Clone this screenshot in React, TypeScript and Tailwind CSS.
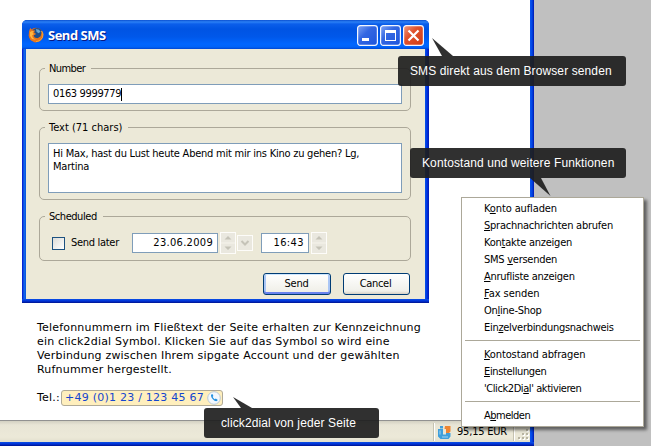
import type { ReactNode } from "react";

const ui = "font-['DejaVu_Sans_Condensed','DejaVu_Sans',sans-serif]";

function Group({ title, titleClass, className, children }: { title: string; titleClass: string; className: string; children: ReactNode }) {
  return (
    <section className={`relative rounded-[5px] border border-[#aca899] ${className}`}>
      <span className={`absolute -top-[8px] left-[5px] bg-[#ece9d8] pl-[4px] pr-[6px] leading-[15px] whitespace-nowrap ${titleClass}`}>{title}</span>
      {children}
    </section>
  );
}

function Spinner() {
  return (
    <svg className="block shrink-0" width="16" height="22" viewBox="0 0 16 22">
      <rect x="0.5" y="0.5" width="15" height="21" fill="#eae8df" stroke="#fdfcf9" />
      <path d="M1 11h14" stroke="#f6f4ec" />
      <path d="M4.500 7.500L8 4l3.500 3.500zM4.500 14.500L8 18l3.500-3.500z" fill="#c5c3b8" />
    </svg>
  );
}

function Firefox() {
  return (
    <svg className="block shrink-0" width="16" height="16" viewBox="0 0 16 16">
      <circle cx="8" cy="8" r="7.200" fill="#d8641b" />
      <circle cx="9" cy="6.300" r="5.200" fill="#1d4f8c" />
      <path d="M8 2l3 .8 1.500 2-2 1.500-2-1.500z" fill="#68a8d4" />
      <path d="M1 4.500L2.200 1l2.200 2.200 2.700.4-1 2 2 1.400-2.500 1.500 1 2 3 .8 3-2 1.400-5.600 1 2.600v4L12 14l-5 1.500-4.500-2.500L.7 9z" fill="#e8761c" />
      <path d="M2 5l2-1 2 .5-1.500 1.300L6 7 4 8.500l1 2.500 3 1.700-4-.7-2-3z" fill="#ffb640" />
      <path d="M13.500 4l1.500 3-.5 3.500-2.500 3-4 1.200" stroke="#f9a733" fill="none" />
    </svg>
  );
}

function WinButton({ kind }: { kind: "min" | "max" | "close" }) {
  return (
    <svg className="block" width="21" height="21" viewBox="0 0 21 21">
      <defs>
        <linearGradient id={`wb-${kind}`} x1="0" y1="0" x2="1" y2="1">
          <stop offset="0" stopColor={kind === "close" ? "#ef9b80" : "#7fa4f5"} />
          <stop offset="0.4" stopColor={kind === "close" ? "#e0522d" : "#3467e2"} />
          <stop offset="1" stopColor={kind === "close" ? "#cf3b12" : "#1c55dc"} />
        </linearGradient>
      </defs>
      <rect x="0.6" y="0.6" width="19.800" height="19.800" rx="2.800" fill={`url(#wb-${kind})`} stroke="#f4f7ff" strokeWidth="1.200" />
      {kind === "min" && <path d="M5 13h7v3H5z" fill="#fff" />}
      {kind === "max" && <path d="M5 5h11v11H5zM6 8v7h9V8z" fill="#fff" fillRule="evenodd" />}
      {kind === "close" && <path d="M5.500 5.500l10 10M15.500 5.500l-10 10" stroke="#fff" strokeWidth="2.200" />}
    </svg>
  );
}

function Dialog() {
  return (
    <div className={`flex h-[283px] w-[407px] flex-col rounded-t-[5px] bg-[linear-gradient(90deg,#0019cf_0,#0831d9_1px,#166aee_2px,#0855dd_4px,#0855dd_403px,#0044ee_404px,#0031dd_405px,#0018b5_407px)] text-[11px] text-black ${ui}`}>
      <div className="flex h-[29px] shrink-0 items-center rounded-t-[5px] bg-[linear-gradient(180deg,#0a4fd0_0,#2b80f5_2px,#0b5eea_4px,#0054e3_9px,#0058ea_17px,#0066ff_24px,#0063f8_27px,#0046d2_29px)] pl-[6px] pr-[5px]">
        <Firefox />
        <span className="ml-[4px] mt-[2px] flex-1 font-['Open_Sans','Noto_Sans',sans-serif] text-[13px] font-bold tracking-[-0.5px] text-white [text-shadow:1px_1px_0_#0a1883]">Send SMS</span>
        <div className="mt-[2px] flex gap-[2px]">
          <WinButton kind="min" />
          <WinButton kind="max" />
          <WinButton kind="close" />
        </div>
      </div>
      <div className="mx-[4px] h-[250px] bg-[#ece9d8] pl-[13px] pr-[14px] pt-[19px]">
        <Group title="Number" titleClass="tracking-[-0.6px]" className="h-[43px] px-[8px] pt-[15px]">
          <div className="flex h-[20px] items-center border border-[#7f9db9] bg-white pl-[4px]">
            <span className="tracking-[-0.35px]">0163 9999779</span>
            <span className="h-[13px] w-px bg-black" />
          </div>
        </Group>
        <Group title="Text (71 chars)" titleClass="tracking-normal" className="mt-[16px] h-[73px] px-[8px] pt-[15px]">
          <div className="h-[50px] border border-[#7f9db9] bg-white pl-[4px] pt-[3px] leading-[13px] tracking-[-0.23px] whitespace-nowrap">
            Hi Max, hast du Lust heute Abend mit mir ins Kino zu gehen? Lg,
            <br />
            Martina
          </div>
        </Group>
        <Group title="Scheduled" titleClass="tracking-[-0.45px]" className="mt-[16px] h-[45px] pl-[12px] pt-[15px]">
          <div className="flex h-[22px] items-center">
            <span className="size-[13px] border border-[#1c5180] bg-[linear-gradient(135deg,#dcdcd7,#fff)]" />
            <span className="ml-[6px] w-[61px] tracking-[-0.3px] whitespace-nowrap">Send later</span>
            <span className="flex h-[20px] w-[86px] items-center justify-end border border-[#7f9db9] bg-white pr-[4px] tracking-[0.3px]">23.06.2009</span>
            <span className="ml-[2px]"><Spinner /></span>
            <svg className="ml-px block" width="16" height="16" viewBox="0 0 16 16">
              <rect x="0.5" y="0.5" width="15" height="15" fill="#eae8df" stroke="#fdfcf9" />
              <path d="M4.500 6L8 9.500 11.500 6" fill="none" stroke="#c5c3b8" strokeWidth="2" />
            </svg>
            <span className="ml-[8px] flex h-[20px] w-[48px] items-center justify-end border border-[#7f9db9] bg-white pr-[4px] tracking-[0.4px]">16:43</span>
            <span className="ml-[2px]"><Spinner /></span>
          </div>
        </Group>
        <div className="mt-[12px] flex justify-end gap-[12px] pr-px">
          <button className="h-[22px] w-[68px] rounded-[3px] border border-[#003c74] bg-[linear-gradient(180deg,#fff,#eeede5)] pr-[1px] tracking-[-0.2px] shadow-[inset_0_-2px_0_#6982ee,inset_0_1px_0_#cee7ff,inset_2px_0_0_#aac6f5,inset_-2px_0_0_#aac6f5]">Send</button>
          <button className="h-[22px] w-[67px] rounded-[3px] border border-[#003c74] bg-[linear-gradient(180deg,#fff,#f0f0ea_85%,#d6d0c5)] pr-[2px] tracking-[-0.3px]">Cancel</button>
        </div>
      </div>
      <div className="h-[4px] bg-[linear-gradient(180deg,#0b50e5,#0032d8_50%,#00138c)]" />
    </div>
  );
}

function Item({ label, at, spacing }: { label: string; at: number; spacing: string }) {
  return (
    <li className={`h-[17px] pl-[22px] leading-[17px] whitespace-nowrap ${spacing}`}>
      {label.slice(0, at)}
      <span className="underline decoration-1 underline-offset-[1px] [text-decoration-skip-ink:none]">{label[at]}</span>
      {label.slice(at + 1)}
    </li>
  );
}

function Menu() {
  return (
    <ul className={`absolute left-[461px] top-[197px] h-[230px] w-[183px] border border-[#aca899] bg-white pt-[2px] text-[11px] text-black shadow-[3px_3px_3px_rgba(0,0,0,0.5)] ${ui}`}>
      <Item label="Konto aufladen" at={1} spacing="tracking-[-0.12px]" />
      <Item label="Sprachnachrichten abrufen" at={0} spacing="tracking-[-0.24px]" />
      <Item label="Kontakte anzeigen" at={3} spacing="tracking-[-0.24px]" />
      <Item label="SMS versenden" at={4} spacing="tracking-[-0.26px]" />
      <Item label="Anrufliste anzeigen" at={0} spacing="tracking-[-0.26px]" />
      <Item label="Fax senden" at={0} spacing="tracking-[-0.05px]" />
      <Item label="Online-Shop" at={2} spacing="tracking-[-0.26px]" />
      <Item label="Einzelverbindungsnachweis" at={3} spacing="tracking-[-0.3px]" />
      <li className="mx-[3px] mb-[5px] mt-[4px] h-px bg-[#aca899]" />
      <Item label="Kontostand abfragen" at={0} spacing="tracking-[-0.12px]" />
      <Item label="Einstellungen" at={0} spacing="tracking-[-0.36px]" />
      <Item label="'Click2Dial' aktivieren" at={9} spacing="tracking-[-0.42px]" />
      <li className="mx-[3px] mb-[5px] mt-[4px] h-px bg-[#aca899]" />
      <Item label="Abmelden" at={1} spacing="tracking-[-0.5px]" />
    </ul>
  );
}

const tip = "absolute flex h-[30px] items-center rounded-[3px] bg-[#1e1e1e]/92 font-['Liberation_Sans',Arial,sans-serif] text-[12px] tracking-[0.11px] text-white whitespace-nowrap";

export default function App() {
  return (
    <div className="relative h-[446px] w-[651px] overflow-hidden bg-[#c0c0c0]">
      <div className="flex h-[446px] w-[534px] flex-col bg-[linear-gradient(90deg,#0a55ee_530px,#0046e6_532px,#0018b0_534px)] pr-[4px]">
        <main className="flex h-[420px] flex-col bg-white pl-[22px] pt-[20px]">
          <Dialog />
          <div className="mt-[18px] pl-[15px] font-['DejaVu_Sans',Verdana,sans-serif] text-[11px] leading-[14px] tracking-[0.19px] whitespace-nowrap text-black">
            <p>Telefonnummern im Fließtext der Seite erhalten zur Kennzeichnung</p>
            <p>ein click2dial Symbol. Klicken Sie auf das Symbol so wird eine</p>
            <p>Verbindung zwischen Ihrem sipgate Account und der gewählten</p>
            <p>Rufnummer hergestellt.</p>
            <div className="mt-[13px] flex items-center">
              <span className="w-[24px]">Tel.:</span>
              <span className="flex h-[16px] w-[162px] items-center justify-between rounded-[3px] border border-[#b0aa98] bg-[#ffefbd] pl-[3px] pr-px tracking-[0.24px] text-[#1446cf]">
                +49 (0)1 23 / 123 45 67
                <svg width="14" height="14" viewBox="0 0 14 14">
                  <circle cx="7" cy="7" r="6.300" fill="#f3f8fd" stroke="#b9c8d6" />
                  <path d="M4.300 3.500c-1.500 2 3 7.500 5.600 6.600l.9-1.200-2-1.300-1 .6C6.700 7.700 6 6.700 5.700 5.800l.7-.8-1-2z" fill="#2492e0" />
                </svg>
              </span>
            </div>
          </div>
        </main>
        <footer className={`flex h-[22px] items-center justify-end border-t border-[#919191] bg-[linear-gradient(180deg,#d2d0c2,#e8e5d6_4px,#ece9d8_16px,#e2dfce)] text-[11px] text-black ${ui}`}>
          <span className="h-[18px] w-[2px] border-l border-[#c6c3b1] bg-white" />
          <svg className="ml-[2px]" width="16" height="16" viewBox="0 0 16 16">
            <path d="M3 2h3v2.500H3zM1 5h5v5.500h3V9h4.500v3.500L11.500 15H3.500L1 12.500z" fill="#3f9fdc" />
            <path d="M8 2h5.500v5.500L12 9H9V5H7.500z" fill="#ef8531" />
            <path d="M3 6.500v4M5 13h6" stroke="#a5d5f2" />
          </svg>
          <span className="ml-[4px] w-[56px] pt-px leading-[14px] tracking-[-0.2px] whitespace-nowrap">95,15 EUR</span>
          <span className="h-[18px] w-[2px] border-l border-[#c6c3b1] bg-white" />
          <svg className="ml-[2px] mt-[6px]" width="13" height="13" viewBox="0 0 13 13">
            <path d="M10 2h2v2h-2zM6 6h2v2H6zM10 6h2v2h-2zM2 10h2v2H2zM6 10h2v2H6zM10 10h2v2h-2z" fill="#fff" />
            <path d="M9 1h2v2H9zM5 5h2v2H5zM9 5h2v2H9zM1 9h2v2H1zM5 9h2v2H5zM9 9h2v2H9z" fill="#b8b4a2" />
          </svg>
        </footer>
        <div className="-mr-[4px] h-[4px] bg-[linear-gradient(180deg,#0b50e5,#0032d8_50%,#00138c)]" />
      </div>

      <div className={`${tip} left-[398px] top-[56px] w-[228px] pl-[12px]`}>
        SMS direkt aus dem Browser senden
        <svg className="absolute -top-[18px] left-[34px]" width="22" height="18"><path d="M0 0L21 18H10z" fill="#1e1e1e" fillOpacity="0.92" /></svg>
      </div>
      <div className={`${tip} left-[410px] top-[148px] w-[216px] pl-[12px]`}>
        Kontostand und weitere Funktionen
        <svg className="absolute left-[120px] top-[30px]" width="22" height="18"><path d="M0 0H11L20.500 18z" fill="#1e1e1e" fillOpacity="0.92" /></svg>
      </div>
      <div className={`${tip} left-[204px] top-[408px] w-[175px] pl-[17px]`}>
        click2dial von jeder Seite
        <svg className="absolute -top-[11px] left-[29px]" width="20" height="11"><path d="M0 0L19 11H8z" fill="#1e1e1e" fillOpacity="0.92" /></svg>
      </div>
      <Menu />
    </div>
  );
}
